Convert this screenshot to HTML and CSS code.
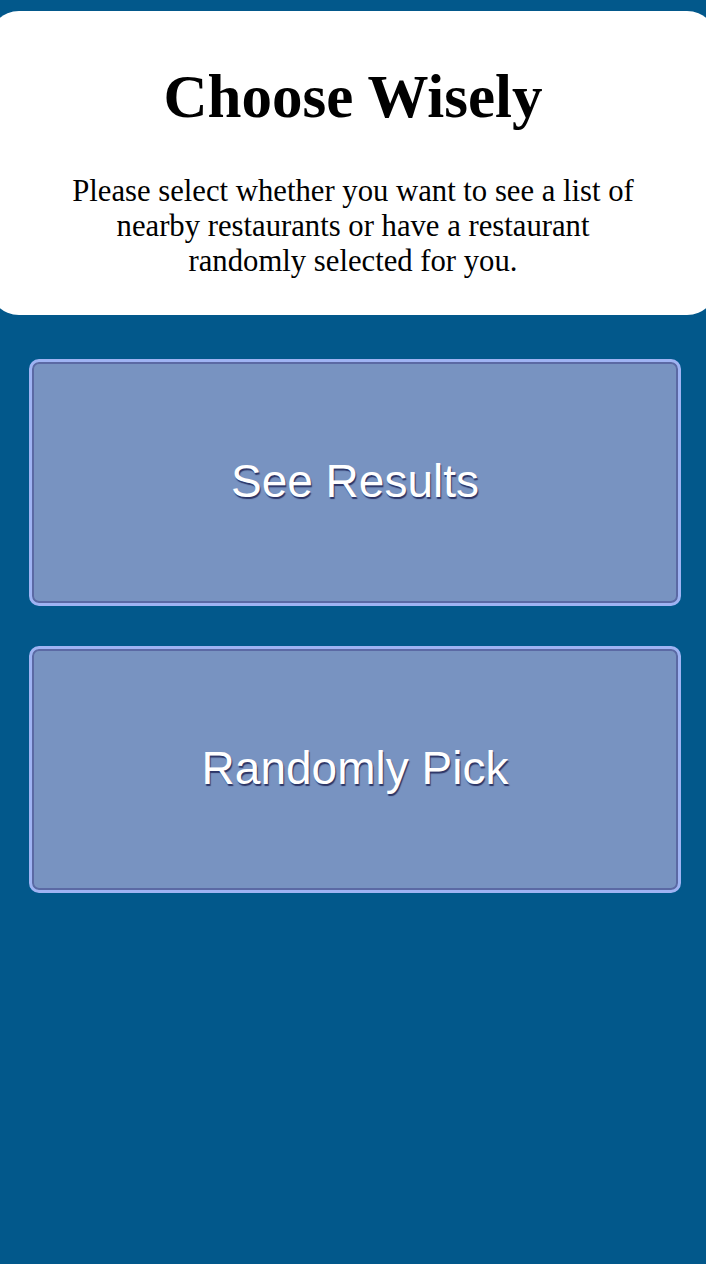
FILE: index.html
```html
<!DOCTYPE html>
<html lang="en">
<head>
<meta charset="utf-8">
<title>Choose Wisely</title>
<link rel="stylesheet" href="styles.css">
</head>
<body>
<header class="card">
  <h1 class="title">Choose Wisely</h1>
  <p class="lead">Please select whether you want to see a list of nearby restaurants or have a restaurant randomly selected for you.</p>
</header>
<main class="choices">
  <button class="choice" type="button">See Results</button>
  <button class="choice" type="button">Randomly Pick</button>
</main>
</body>
</html>
```
FILE: styles.css
```css
html, body {
  margin: 0;
  padding: 0;
}
body {
  background: #02588b;
  min-height: 1264px;
  overflow: hidden;
}
.card {
  background: #ffffff;
  margin: 11px -11px 0 -11px;
  height: 304px;
  box-sizing: border-box;
  border-radius: 30px;
  padding: 51px 0 0 0;
  text-align: center;
  font-family: "Liberation Serif", "Times New Roman", serif;
  color: #000;
}
.title {
  margin: 0;
  font-size: 61px;
  line-height: 70px;
  font-weight: bold;
}
.lead {
  margin: 42px auto 0;
  width: 578px;
  font-size: 30.7px;
  line-height: 35px;
}
.choices {
  display: flex;
  flex-direction: column;
  gap: 40px;
  padding: 44px 25px 0 29px;
}
.choice {
  height: 247px;
  box-sizing: border-box;
  background: #7893c1;
  border: 3px solid #9fb3f3;
  border-radius: 10px;
  box-shadow: inset 0 0 0 2px #5b69a4;
  color: #ffffff;
  font-family: "Liberation Sans", Arial, sans-serif;
  font-size: 46px;
  text-shadow: 1px 2px 1px #2c3566;
  cursor: pointer;
  padding: 0 0 3px 0;
}
```
